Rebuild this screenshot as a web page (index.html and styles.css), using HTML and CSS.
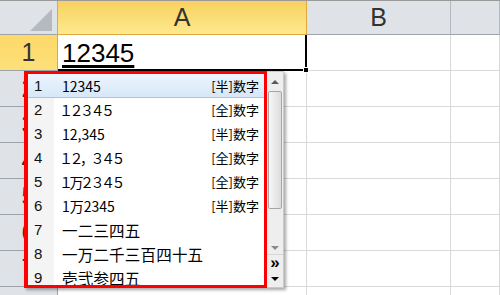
FILE: index.html
```html
<!DOCTYPE html>
<html lang="ja">
<head>
    <meta charset="UTF-8">
    <title>変換候補</title>
    <link rel="stylesheet" href="styles.css">
</head>
<body>
    <div class="sheet">
        <div class="row head">
            <div class="rh corner"><span class="corner-tri"></span></div>
            <div class="col a sel">A</div>
            <div class="col b">B</div>
            <div class="col c"></div>
        </div>
        <div class="row r1">
            <div class="rh sel">1</div>
            <div class="cell a active"><span class="ime">12345</span><span class="handle"></span></div>
            <div class="cell b"></div>
            <div class="cell c"></div>
        </div>
        <div class="row"><div class="rh">2</div><div class="cell a"></div><div class="cell b"></div><div class="cell c"></div></div>
        <div class="row"><div class="rh">3</div><div class="cell a"></div><div class="cell b"></div><div class="cell c"></div></div>
        <div class="row"><div class="rh">4</div><div class="cell a"></div><div class="cell b"></div><div class="cell c"></div></div>
        <div class="row"><div class="rh">5</div><div class="cell a"></div><div class="cell b"></div><div class="cell c"></div></div>
        <div class="row"><div class="rh">6</div><div class="cell a"></div><div class="cell b"></div><div class="cell c"></div></div>
        <div class="row"><div class="rh">7</div><div class="cell a"></div><div class="cell b"></div><div class="cell c"></div></div>
        <div class="row"><div class="rh"></div><div class="cell a"></div><div class="cell b"></div><div class="cell c"></div></div>

        <!-- 変換候補ウィンドウ -->
        <div class="popup">
            <div class="list">
                <div class="item on"><span class="no">1</span><span class="txt">12345</span><span class="kind">[半]数字</span></div>
                <div class="item"><span class="no">2</span><span class="txt wide">１２３４５</span><span class="kind">[全]数字</span></div>
                <div class="item"><span class="no">3</span><span class="txt">12,345</span><span class="kind">[半]数字</span></div>
                <div class="item"><span class="no">4</span><span class="txt wide">１２，３４５</span><span class="kind">[全]数字</span></div>
                <div class="item"><span class="no">5</span><span class="txt wide">１万２３４５</span><span class="kind">[全]数字</span></div>
                <div class="item"><span class="no">6</span><span class="txt">1万2345</span><span class="kind">[半]数字</span></div>
                <div class="item"><span class="no">7</span><span class="txt kanji">一二三四五</span></div>
                <div class="item"><span class="no">8</span><span class="txt kanji">一万二千三百四十五</span></div>
                <div class="item"><span class="no">9</span><span class="txt kanji">壱弐参四五</span></div>
            </div>
            <div class="scroll">
                <div class="btn-up"><span class="tri-up"></span></div>
                <div class="thumb"></div>
                <div class="track"></div>
                <div class="btn-down"><span class="tri-down small"></span></div>
                <div class="btn-more">»</div>
                <div class="btn-page"><span class="tri-down"></span></div>
            </div>
        </div>
    </div>
</body>
</html>
```

FILE: styles.css
```css
:root {
    --grid: #d9d9d9;
    --head-line: #9ea4ab;
    --head-bg: #dfe3e8;
    --sel-line: #e1a83e;
}

* {
    box-sizing: border-box;
}

body {
    margin: 0;
    padding: 0;
    background: #fff;
}

.sheet {
    position: relative;
    width: 500px;
    height: 295px;
    overflow: hidden;
    font-family: 'Liberation Sans', Arial, sans-serif;
    color: #333;
}

.row {
    display: flex;
    height: 36px;
}

.row.head {
    height: 35px;
    border-top: 1px solid #9a9a9a;
}

/* Row headers */
.rh {
    width: 58px;
    flex: none;
    background: var(--head-bg);
    border-right: 1px solid var(--head-line);
    border-bottom: 1px solid var(--head-line);
    font-size: 25px;
    text-align: center;
    line-height: 35px;
    color: #333;
}

.rh.sel {
    background: linear-gradient(#fdd969, #fde07a);
    border-right-color: var(--sel-line);
}

.corner {
    display: flex;
    justify-content: flex-end;
    align-items: flex-end;
    padding: 0 5px 3px 0;
    border-right-color: var(--sel-line);
}

.corner-tri {
    width: 0;
    height: 0;
    border-left: 22px solid transparent;
    border-bottom: 22px solid #b5babf;
}

/* Column headers */
.col {
    background: var(--head-bg);
    border-right: 1px solid #b4b9bf;
    border-bottom: 1px solid var(--head-line);
    font-size: 25px;
    text-align: center;
    line-height: 33px;
}

.col.sel {
    background: linear-gradient(#f8d15e, #fee98f);
    border-right-color: var(--sel-line);
    border-bottom-color: var(--sel-line);
}

.a { width: 249px; flex: none; }
.b { width: 144px; flex: none; }
.c { flex: 1; }

/* Cells */
.cell {
    border-right: 1px solid var(--grid);
    border-bottom: 1px solid var(--grid);
}

.cell.active {
    position: relative;
    border-right: 2px solid #000;
    border-bottom: 2px solid #000;
    padding: 5px 0 0 4px;
}

.ime {
    font-size: 26px;
    line-height: 26px;
    color: #000;
    text-decoration: underline;
    text-decoration-thickness: 3px;
    text-underline-offset: 3px;
}

.handle {
    position: absolute;
    right: -4px;
    bottom: -4px;
    width: 6px;
    height: 6px;
    background: #000;
    border: 1px solid #fff;
}

/* Candidate window */
.popup {
    position: absolute;
    left: 24px;
    top: 71px;
    display: flex;
    height: 217px;
}

.list {
    width: 243px;
    height: 217px;
    border: 3px solid #ff0000;
    border-left-width: 4px;
    background: #fff;
    overflow: hidden;
    box-shadow: 2px 2px 3px rgba(0,0,0,0.35);
}

.item {
    display: flex;
    align-items: center;
    height: 24px;
    color: #000;
}

.item.on {
    background: linear-gradient(#eef5fd, #d6e7f9);
    border-bottom: 1px solid #a3c6ec;
}

.no {
    width: 26px;
    height: 100%;
    flex: none;
    padding-left: 6px;
    font-size: 15px;
    line-height: 24px;
    color: #111;
    background: #f4f4f4;
}

.item.on .no {
    background: transparent;
}

.txt {
    flex: 1;
    padding-left: 8px;
    font-family: 'Noto Sans CJK JP', sans-serif;
    font-size: 14px;
    line-height: 24px;
    white-space: nowrap;
}

.txt.wide {
    padding-left: 5px;
    letter-spacing: -3.5px;
}

.txt.kanji {
    font-size: 15.5px;
    letter-spacing: 0.2px;
}

.kind {
    padding-right: 5px;
    font-family: 'Noto Sans CJK JP', sans-serif;
    font-size: 13px;
    line-height: 24px;
    white-space: nowrap;
}

/* Scrollbar */
.scroll {
    width: 17px;
    height: 217px;
    display: flex;
    flex-direction: column;
    align-items: center;
    background: #eeeeee;
    border: 1px solid #c9c9c9;
    border-left: none;
    box-shadow: 2px 2px 3px rgba(0,0,0,0.35);
}

.btn-up {
    height: 19px;
    display: flex;
    align-items: center;
}

.tri-up {
    width: 0;
    height: 0;
    border-left: 4px solid transparent;
    border-right: 4px solid transparent;
    border-bottom: 4px solid #5a5a5a;
}

.thumb {
    width: 14px;
    height: 118px;
    border: 1px solid #a5a5a5;
    border-radius: 2px;
    background: linear-gradient(to right, #f6f6f6, #dcdcdc);
}

.track {
    flex: 1;
}

.btn-down {
    height: 13px;
    display: flex;
    align-items: center;
}

.tri-down {
    width: 0;
    height: 0;
    border-left: 4px solid transparent;
    border-right: 4px solid transparent;
    border-top: 4px solid #000;
}

.tri-down.small {
    border-top-color: #8a8a8a;
}

.btn-more {
    width: 100%;
    height: 17px;
    border-top: 1px solid #d6d6d6;
    text-align: center;
    font-size: 17px;
    font-weight: bold;
    line-height: 15px;
    color: #000;
}

.btn-page {
    height: 16px;
    display: flex;
    align-items: center;
}
```
